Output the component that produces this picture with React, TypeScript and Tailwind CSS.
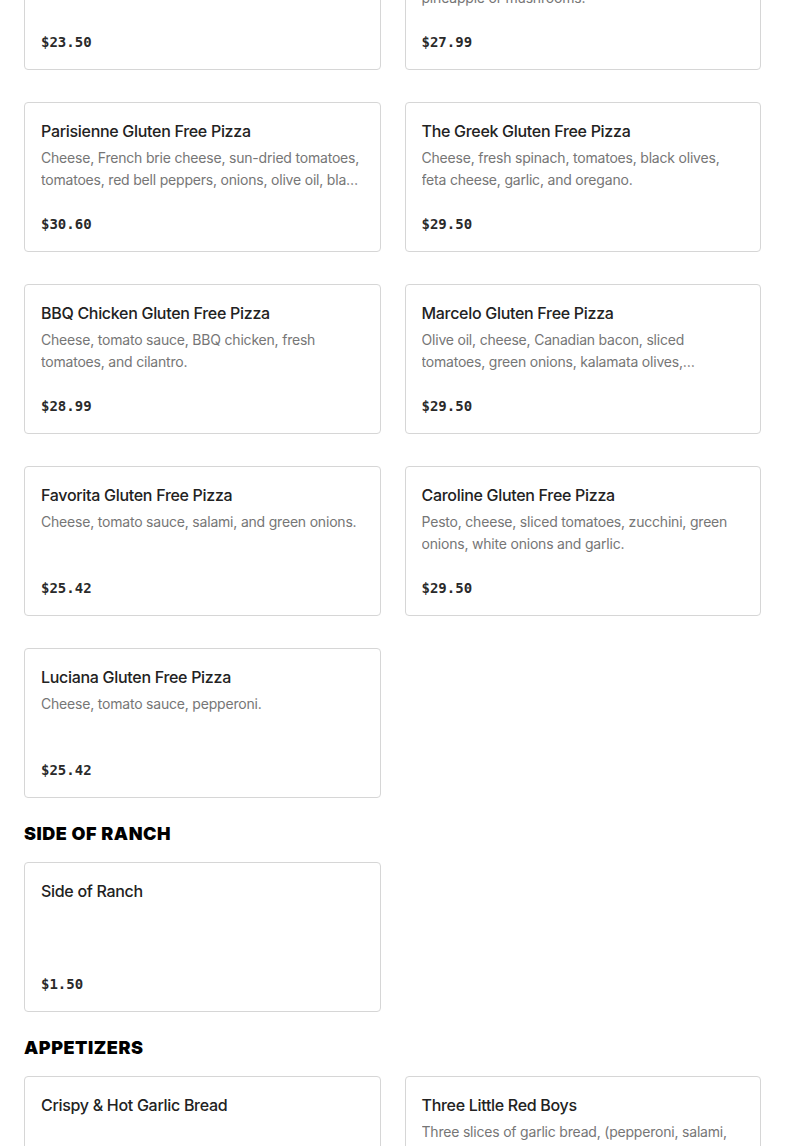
import React from 'react';

interface Item {
  name: string;
  desc?: string;
  price: string;
}

interface Section {
  title?: string;
  items: Item[];
}

const SECTIONS: Section[] = [
  {
    items: [
      { name: 'Margherita Gluten Free Pizza', desc: 'Cheese, tomato sauce, fresh basil.', price: '$23.50' },
      {
        name: 'Hawaiian Gluten Free Pizza',
        desc: 'Cheese, tomato sauce, Canadian bacon, and pineapple or mushrooms.',
        price: '$27.99',
      },
      {
        name: 'Parisienne Gluten Free Pizza',
        desc: 'Cheese, French brie cheese, sun-dried tomatoes, tomatoes, red bell peppers, onions, olive oil, black olives and garlic.',
        price: '$30.60',
      },
      {
        name: 'The Greek Gluten Free Pizza',
        desc: 'Cheese, fresh spinach, tomatoes, black olives, feta cheese, garlic, and oregano.',
        price: '$29.50',
      },
      {
        name: 'BBQ Chicken Gluten Free Pizza',
        desc: 'Cheese, tomato sauce, BBQ chicken, fresh tomatoes, and cilantro.',
        price: '$28.99',
      },
      {
        name: 'Marcelo Gluten Free Pizza',
        desc: 'Olive oil, cheese, Canadian bacon, sliced tomatoes, green onions, kalamata olives, artichoke hearts and garlic.',
        price: '$29.50',
      },
      { name: 'Favorita Gluten Free Pizza', desc: 'Cheese, tomato sauce, salami, and green onions.', price: '$25.42' },
      {
        name: 'Caroline Gluten Free Pizza',
        desc: 'Pesto, cheese, sliced tomatoes, zucchini, green onions, white onions and garlic.',
        price: '$29.50',
      },
      { name: 'Luciana Gluten Free Pizza', desc: 'Cheese, tomato sauce, pepperoni.', price: '$25.42' },
    ],
  },
  {
    title: 'Side of Ranch',
    items: [{ name: 'Side of Ranch', price: '$1.50' }],
  },
  {
    title: 'Appetizers',
    items: [
      { name: 'Crispy & Hot Garlic Bread', price: '$6.99' },
      {
        name: 'Three Little Red Boys',
        desc: 'Three slices of garlic bread, (pepperoni, salami, and cheese) baked to perfection.',
        price: '$8.99',
      },
    ],
  },
];

function MenuCard({ item }: { item: Item }) {
  return (
    <div className="h-[150px] flex flex-col justify-between bg-white border border-[#d6d6d6] rounded-[4px] px-4 pt-4 pb-[17px]">
      <div>
        <h3 className="text-[16px] leading-6 font-medium text-[#222222] tracking-[-0.3px] mb-1">{item.name}</h3>
        {item.desc && (
          <p className="text-[14px] leading-[22px] text-[#767676] tracking-[-0.2px] line-clamp-2">{item.desc}</p>
        )}
      </div>
      <p
        className="text-[14px] leading-5 font-bold text-[#2a2a2a]"
        style={{ fontFamily: '"DejaVu Sans Mono", "Liberation Mono", monospace' }}
      >
        {item.price}
      </p>
    </div>
  );
}

export default function App() {
  return (
    <div className="min-h-screen bg-white overflow-hidden" style={{ fontFamily: 'Inter, "Noto Sans", sans-serif' }}>
      <div className="-mt-[80px] px-6">
        {SECTIONS.map((s, i) => (
          <section key={i}>
            {s.title && (
              <h2 className="mt-[22px] mb-[14px] text-[18px] leading-7 font-black uppercase text-black tracking-[0.03em]">
                {s.title}
              </h2>
            )}
            <div className="grid grid-cols-2 gap-x-6 gap-y-8">
              {s.items.map((it) => (
                <MenuCard key={it.name} item={it} />
              ))}
            </div>
          </section>
        ))}
      </div>
    </div>
  );
}
